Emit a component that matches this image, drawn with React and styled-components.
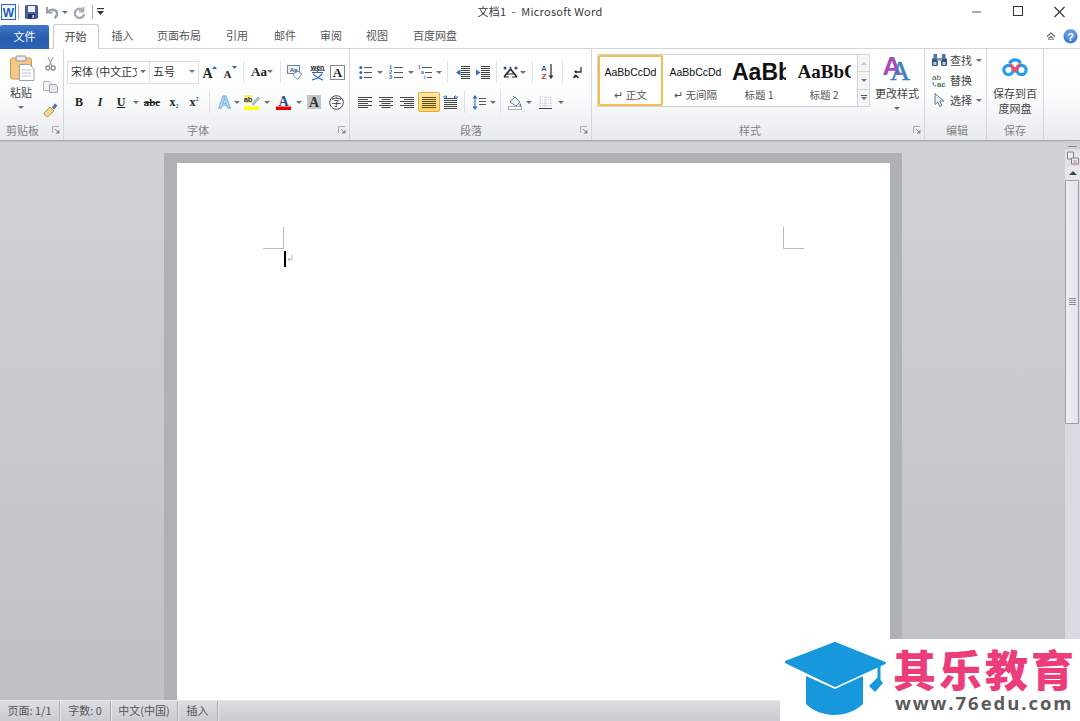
import React from "react";
import styled, { createGlobalStyle } from "styled-components";

const Global = createGlobalStyle`
  html, body { margin: 0; padding: 0; overflow: hidden; background: #fff; }
  #root { width: 1080px; height: 721px; }
  * { box-sizing: border-box; }
`;
const CJK = `"Noto Sans CJK SC", "Noto Sans", sans-serif`;

const Win = styled.div`
  position: relative; width: 1080px; height: 721px; display: flex; flex-direction: column;
  overflow: hidden; font-family: ${CJK}; font-size: 11px; color: #444; background: #fff;
`;
/* title bar */
const TitleBar = styled.div`
  height: 24px; flex: none; display: grid; grid-template-columns: 1fr auto 1fr; align-items: center;
`;
const Qat = styled.div`display: flex; align-items: center; padding-left: 1px;`;
const QatCell = styled.div`
  width: ${p => p.$w}px; height: 24px; display: flex; align-items: center; justify-content: center;
`;
const QatSep = styled.div`width: 1px; height: 14px; background: #a9adb2; margin: 0 ${p => p.$m}px;`;
const Title = styled.div`font-size: 11px; color: #3a3a3a; white-space: pre; letter-spacing: .25px; margin-top: -3px;`;
const WinCtrls = styled.div`display: flex; justify-content: flex-end; align-items: center; height: 24px; margin-top: -1px;`;
const WinBtn = styled.div`
  width: 41px; height: 24px; display: flex; align-items: center; justify-content: center;
`;
/* tabs */
const TabBar = styled.div`
  height: 25px; flex: none; display: flex; align-items: flex-end; position: relative;
  border-bottom: 1px solid #d4d7da;
`;
const FileTab = styled.div`
  width: 49px; height: 24px; margin-bottom: -1px; background: linear-gradient(#3f78c9, #2a5cae 55%, #2b62b8);
  color: #fff; display: flex; align-items: center; justify-content: center; border-radius: 2px 2px 0 0; padding-bottom: 2px;
`;
const HomeTab = styled.div`
  width: 46px; height: 25px; margin: 0 0 -1px 4px; background: #fff; border: 1px solid #c6c9cd; border-bottom: 0;
  border-radius: 3px 3px 0 0; display: flex; align-items: center; justify-content: center; color: #444; padding: 0 1px 2px 0;
`;
const Tab = styled.div`
  width: ${p => p.$w}px; height: 24px; display: flex; align-items: center; justify-content: center; color: #555; padding-bottom: 2px;
`;
const TabRight = styled.div`margin-left: auto; height: 24px; display: flex; align-items: center; gap: 7px; padding-right: 2px;`;
/* ribbon */
const Ribbon = styled.div`
  height: 92px; flex: none; display: flex; background: linear-gradient(#fff, #fbfcfc 50%, #e8ebee);
  border-bottom: 1px solid #a5a9ad;
`;
const Group = styled.div`
  width: ${p => p.$w}px; flex: none; display: flex; flex-direction: column; border-right: 1px solid #d3d6da;
`;
const GroupBody = styled.div`height: 73px; flex: none; display: flex; padding-left: ${p => p.$pl || 0}px;`;
const GroupLabel = styled.div`
  flex: 1; display: grid; grid-template-columns: ${p => p.$left}px auto 1fr; align-items: center; color: #7f8388; padding-bottom: 2px;
`;
const LabelText = styled.span`grid-column: 2;`;
const LauncherBox = styled.span`grid-column: 3; justify-self: end; margin-right: 3px; display: flex;`;
const Launcher = () => (
  <LauncherBox>
    <svg width="8" height="8" viewBox="0 0 8 8" fill="none">
      <path d="M.5 7V.5H7" stroke="#a6aaaf" />
      <path d="M3 3l3 3" stroke="#85898e" />
      <path d="M7.500 3.500v4h-4z" fill="#85898e" />
    </svg>
  </LauncherBox>
);
const Rows = styled.div`display: flex; flex-direction: column; gap: 6px; padding: 11px 0 0 4px;`;
const Row = styled.div`height: 24px; display: flex; align-items: center;`;
const Cell = styled.div`
  width: ${p => p.$w}px; height: 22px; flex: none; display: flex; align-items: center; justify-content: center;
`;
const RaisedCell = styled(Cell)`padding-bottom: 2px;`;
const Active = styled(Cell)`
  height: 20px; background: linear-gradient(#fde9a5, #fbd564); border: 1px solid #e2ac45; border-radius: 2px;
`;
const SepCell = styled.div`
  width: ${p => p.$w}px; height: 22px; flex: none; display: flex; justify-content: center;
  &::before { content: ""; width: 1px; background: #dfe1e4; }
`;
const Caret = styled.i`
  display: block; width: 0; height: 0; border: 3px solid transparent; border-top: 3px solid #6d7278; border-bottom: 0;
`;
const CaretCell = ({ w = 6 }) => <Cell $w={w}><Caret /></Cell>;
const Combo = styled.div`
  width: ${p => p.$w}px; height: 23px; flex: none; background: #fff; border: 1px solid #d9dce0; margin-left: -1px;
  display: flex; align-items: center; justify-content: space-between; padding: 0 3px 2px 3px; color: #333;
`;
const ComboText = styled.span`width: ${p => p.$w}px; overflow: hidden; white-space: nowrap; display: block;`;
const Fmt = styled.span`
  font-family: "Liberation Serif", serif; font-size: ${p => p.$s || 12}px; color: #222;
  font-weight: ${p => (p.$b ? 700 : 400)}; font-style: ${p => (p.$i ? "italic" : "normal")};
  text-decoration: ${p => p.$d || "none"}; line-height: 1; white-space: nowrap;
`;
const Sub = styled.sub`font-size: 6px; color: #2b62b8; vertical-align: -2px; line-height: 0;`;
const Sup = styled.sup`font-size: 6px; color: #2b62b8; vertical-align: 5px; line-height: 0;`;
/* clipboard */
const PasteCol = styled.div`
  width: 42px; flex: none; display: flex; flex-direction: column; align-items: center; padding: 6px 0 0 2px; color: #444;
`;
const PasteText = styled.div`margin: 3px 0 6px -2px; line-height: 16px;`;
const PasteCaret = styled.div`margin-left: -2px;`;
const MiniCol = styled.div`
  width: 16px; flex: none; display: flex; flex-direction: column; align-items: center; gap: 10px; padding-top: 8px;
`;
/* styles */
const StylesBody = styled(GroupBody)`padding: 5px 0 0 5px;`;
const Gallery = styled.div`
  width: 262px; height: 53px; background: #fff; border: 1px solid #d0d3d7; display: flex; overflow: hidden;
`;
const StyleCard = styled.div`
  width: ${p => p.$w}px; flex: none; height: 51px; display: flex; flex-direction: column; align-items: center; overflow: hidden;
  border: ${p => (p.$on ? "2px solid #f0c04f" : "0")}; border-radius: ${p => (p.$on ? 2 : 0)}px; padding-top: ${p => (p.$on ? 5 : 7)}px;
`;
const Preview = styled.div`
  height: 20px; width: ${p => p.$clip || 60}px; overflow: hidden; display: flex; align-items: center;
  justify-content: ${p => (p.$clip ? "flex-start" : "center")}; white-space: nowrap;
  font-family: ${p => p.$f || `"Liberation Sans", sans-serif`}; font-size: ${p => p.$s}px; color: #111;
  font-weight: ${p => (p.$b ? 700 : 400)};
`;
const StyleName = styled.div`font-size: 10.5px; color: #555; margin-top: 5px; line-height: 15px; white-space: pre;`;
const Scroller = styled.div`width: 12px; height: 53px; flex: none; display: flex; flex-direction: column;`;
const ScrollKey = styled.div`
  flex: 1; background: #f4f5f7; border: 1px solid #d3d6da; border-left: 0; margin-top: ${p => (p.$first ? 0 : -1)}px;
  display: flex; flex-direction: column; gap: 1px; align-items: center; justify-content: center;
`;
const Up = styled.i`display: block; border: 3px solid transparent; border-bottom: 3px solid #c4c7cb; border-top: 0;`;
const Bar = styled.i`display: block; width: 6px; height: 1px; background: #555;`;
const ChangeStyles = styled.div`
  width: 54px; display: flex; flex-direction: column; align-items: center; color: #444;
`;
const ChangeText = styled.div`line-height: 16px; margin: 4px 0 6px;`;
/* editing */
const EditCol = styled.div`display: flex; flex-direction: column; gap: 4px; padding: 3px 0 0 6px;`;
const EditRow = styled.div`height: 16px; display: flex; align-items: center; gap: 3px; color: #444;`;
const EditIcon = styled.div`width: 16px; display: flex; justify-content: center;`;
const EditCaret = styled.div`margin-left: 1px;`;
const SaveCol = styled.div`display: flex; flex-direction: column; align-items: center; width: 56px; padding-top: 7px;`;
const SaveText = styled.div`line-height: 15px; text-align: center; margin-top: 9px; color: #444;`;
/* doc */
const DocArea = styled.div`flex: 1; min-height: 0; display: flex; background: linear-gradient(#cfd2d6, #bec2c6);`;
const DocScroll = styled.div`
  flex: 1; display: flex; justify-content: center; padding: 11px 0 0 1px; overflow: hidden; border-top: 1px solid #bfc3c7;
`;
const PageEdge = styled.div`width: 738px; background: #aeb2b6; padding: 10px 12px 0 13px;`;
const Page = styled.div`height: 100%; background: #fff; padding: 64px 86px 0;`;
const MarginRow = styled.div`display: flex; justify-content: space-between;`;
const Crop = styled.div`
  width: 21px; height: 22px; border-bottom: 1px solid #b9b9b9;
  ${p => (p.$right ? "border-left: 1px solid #b9b9b9;" : "border-right: 1px solid #b9b9b9;")}
`;
const CaretLine = styled.div`display: flex; align-items: center; margin: 2px 0 0 21px; gap: 1px;`;
const TextCursor = styled.div`width: 2px; height: 16px; background: #000;`;
const VScroll = styled.div`
  width: 15px; flex: none; display: flex; flex-direction: column; background: #d8dbe1;
`;
const Splitter = styled.div`height: 8px; background: #cdd0d5; display: flex; justify-content: center; padding-top: 5px;
  &::before { content: ""; width: 9px; height: 1px; background: #888; }
`;
const RulerBtn = styled.div`height: 15px; margin-top: 1px; background: #e2e4e8; display: flex; align-items: center; justify-content: center;`;
const UpBtn = styled.div`
  height: 14px; margin-top: 1px; background: #e6e8ec; display: flex; align-items: center; justify-content: center;
  &::before { content: ""; border: 4px solid transparent; border-bottom: 4px solid #444; border-top: 0; }
`;
const Thumb = styled.div`
  height: 244px; background: linear-gradient(90deg, #eef0f4, #dfe3ea); border: 1px solid #9ba0a6; display: flex; flex-direction: column;
  align-items: center; justify-content: center; gap: 1px; padding-bottom: 2px; border-radius: 1px;
  margin-right: 1px;
`;
const Grip = styled.i`display: block; width: 7px; height: 1px; background: #8b9096;`;
/* status */
const Status = styled.div`
  height: 21px; flex: none; display: flex; background: linear-gradient(#dcdee1, #c9ccd0); border-top: 1px solid #e4e6e8;
  color: #555; align-items: center;
`;
const StatusItem = styled.div`
  width: ${p => p.$w}px; height: 20px; display: flex; align-items: center; justify-content: center; border-right: 1px solid #a9adb2;
  box-shadow: 1px 0 0 #e8eaec; white-space: nowrap; padding-bottom: 2px;
`;
/* watermark, lies over the window */
const Brand = styled.div`
  position: absolute; right: 0; bottom: 0; width: 300px; height: 82px; background: #fff; display: flex; align-items: flex-start;
`;
const BrandMark = styled.div`width: 115px; padding: 3px 0 0 5px; flex: none;`;
const BrandText = styled.div`display: flex; flex-direction: column; width: 185px;`;
const BrandName = styled.div`
  color: #ec3c7a; font-size: 43px; font-weight: 900; line-height: 50px; margin: 4px 0 0 -2px; letter-spacing: 3px; white-space: nowrap;
  font-family: "Noto Sans CJK SC", sans-serif;
`;
const BrandUrl = styled.div`
  color: #5b5b5b; font: 700 18.5px/20px "Open Sans", sans-serif; letter-spacing: 1.95px; white-space: nowrap;
`;

/* ---------- icons ---------- */
const WordLogo = () => (
  <svg width="15" height="16" viewBox="0 0 15 16">
    <rect x=".5" y=".5" width="14" height="15" fill="#e6f1fb" stroke="#2b6cc0" />
    <rect x="2" y="2.5" width="11" height="11" fill="#fff" />
    <text x="7.5" y="12.5" textAnchor="middle" fontFamily="Liberation Sans" fontWeight="700" fontSize="12" fill="#1d5bb0">W</text>
  </svg>
);
const SaveIco = () => (
  <svg width="13" height="14" viewBox="0 0 13 14">
    <rect x=".5" y=".5" width="12" height="13" rx="1" fill="#4660ab" stroke="#3a4f90" />
    <rect x="3" y="1" width="7" height="6" fill="#eef1f8" />
    <rect x="3" y="9" width="7" height="4.5" fill="#27335f" />
    <rect x="7.5" y="10" width="1.5" height="3" fill="#dfe3ee" />
  </svg>
);
const UndoIco = () => (
  <svg width="14" height="13" viewBox="0 0 14 13" fill="none">
    <path d="M2 1v5.500h5.500" stroke="#98a2ae" strokeWidth="2.200" />
    <path d="M2.500 6C5 2.500 12 3 12 7.500c0 2-1 3.500-2.500 4.500" stroke="#98a2ae" strokeWidth="2.400" />
  </svg>
);
const RedoIco = () => (
  <svg width="13" height="13" viewBox="0 0 13 13" fill="none">
    <path d="M10.500 1v4.500H6" stroke="#a5adb7" strokeWidth="1.800" />
    <path d="M10 4.500A4.600 4.600 0 1 0 11 8" stroke="#a5adb7" strokeWidth="2.400" />
  </svg>
);
const QatMore = () => (
  <svg width="7" height="8" viewBox="0 0 7 8"><rect width="7" height="1.2" fill="#333" /><path d="M0 3h7L3.5 7z" fill="#333" /></svg>
);
const MinIco = () => <svg width="11" height="11" viewBox="0 0 11 11"><path d="M0 6h9" stroke="#555" /></svg>;
const MaxIco = () => <svg width="11" height="11" viewBox="0 0 11 11"><rect x=".5" y=".5" width="9" height="9" fill="none" stroke="#333" /></svg>;
const CloseIco = () => <svg width="12" height="12" viewBox="0 0 12 12"><path d="M.5 1l10 10M10.500 1L.5 11" stroke="#333" strokeWidth="1.1" /></svg>;
const Collapse = () => (
  <svg width="10" height="9" viewBox="0 0 10 9" fill="none"><path d="M1 4.5L5 1l4 3.5M2.5 6.5L5 4.5l2.5 2" stroke="#666" strokeWidth="1.1" /><path d="M2 7.5h6" stroke="#999" /></svg>
);
const Help = () => (
  <svg width="15" height="15" viewBox="0 0 15 15">
    <circle cx="7.5" cy="7.5" r="7" fill="#3f7fd2" />
    <circle cx="7.5" cy="5" r="6" fill="#7fb0e8" opacity=".5" />
    <text x="7.5" y="11.5" textAnchor="middle" fontFamily="Liberation Sans" fontWeight="700" fontSize="11" fill="#fff">?</text>
  </svg>
);
const PasteIco = () => (
  <svg width="25" height="26" viewBox="0 0 25 26">
    <rect x=".5" y="3" width="21" height="21" rx="2" fill="#f6c885" stroke="#c39a5c" />
    <rect x="6" y="1" width="10" height="5" rx="1" fill="#e8ebee" stroke="#8c9096" />
    <path d="M9.500 9.500h10l4.500 4.500v11.500H9.500z" fill="#fff" stroke="#9ba3ab" />
    <path d="M12 15h9M12 18h9M12 21h9" stroke="#b5c4d4" />
  </svg>
);
const CutIco = () => (
  <svg width="11" height="14" viewBox="0 0 11 14" fill="none">
    <path d="M3 0l4 9M8 0L4 9" stroke="#a2a7ad" strokeWidth="1.2" />
    <circle cx="2.8" cy="11" r="2" stroke="#8f8f8f" strokeWidth="1.3" /><circle cx="8.2" cy="11" r="2" stroke="#8f8f8f" strokeWidth="1.3" />
  </svg>
);
const CopyIco = () => (
  <svg width="15" height="12" viewBox="0 0 15 12">
    <path d="M.5.5h6l2 2v7h-8z" fill="#f2f2f3" stroke="#b2b6ba" /><path d="M6.5 3.5h6l2 2v6h-8z" fill="#e6e8ea" stroke="#a4a8ad" />
  </svg>
);
const BrushIco = () => (
  <svg width="15" height="14" viewBox="0 0 15 14">
    <path d="M1 10l6-6 4 4-6 5.5c-2 .5-4-1.500-4-3.500z" fill="#f0d78e" stroke="#b79a4e" />
    <path d="M9 4l3-3.500 2.500 2L11 6.500z" fill="#5b6fae" />
  </svg>
);
const GrowIco = ({ down }) => (
  <svg width="15" height="14" viewBox="0 0 15 14">
    <text x="5.500" y="13" textAnchor="middle" fontFamily="Liberation Serif" fontWeight="700" fontSize={down ? 11 : 14} fill="#222">A</text>
    <path d={down ? "M10 1h5l-2.500 3z" : "M10 4h5l-2.500-3z"} fill="#2b62b8" />
  </svg>
);
const ClearIco = () => (
  <svg width="16" height="15" viewBox="0 0 16 15">
    <rect x=".5" y=".5" width="12" height="8" fill="#eef3f8" stroke="#6e88a5" />
    <text x="6.500" y="7" textAnchor="middle" fontFamily="Liberation Sans" fontWeight="700" fontSize="6" fill="#3c5572">Aa</text>
    <path d="M6 9l5-3 4 3-4 5c-2 .5-4-3-5-5z" fill="#f4f4f6" stroke="#6e88a5" />
  </svg>
);
const PinyinIco = () => (
  <svg width="17" height="17" viewBox="0 0 17 17">
    <text x="8.500" y="6" textAnchor="middle" fontFamily="Liberation Sans" fontWeight="700" fontSize="7" fill="#222">wén</text>
    <path d="M1 6.500h15" stroke="#777" /><path d="M3 8.500h11M4 9.500c2 3 6 5 10 6.500M13 9.500C11 13 7 15 3 16M8.500 6.500v2" stroke="#2b62b8" strokeWidth="1.2" fill="none" />
  </svg>
);
const BoxA = () => (
  <svg width="15" height="15" viewBox="0 0 15 15">
    <rect x=".5" y=".5" width="14" height="14" fill="#fff" stroke="#7e8a96" />
    <text x="7.500" y="12" textAnchor="middle" fontFamily="Liberation Serif" fontWeight="700" fontSize="13" fill="#222">A</text>
  </svg>
);
const EffectA = () => (
  <svg width="15" height="16" viewBox="0 0 15 16">
    <text x="7.500" y="14" textAnchor="middle" fontFamily="Liberation Sans" fontWeight="700" fontSize="17" fill="#d8ecfa" stroke="#6daee3" strokeWidth="1">A</text>
  </svg>
);
const HighlightIco = () => (
  <svg width="16" height="15" viewBox="0 0 16 15">
    <rect x="0" y="0" width="8" height="8" fill="#f6ee7c" />
    <text x="4" y="7" textAnchor="middle" fontFamily="Liberation Sans" fontWeight="700" fontSize="7.500" fill="#333">ab</text>
    <path d="M8 9l6-7 1.500 1.500-6 6.500z" fill="#b9cfe6" stroke="#6a8db3" strokeWidth=".7" />
    <rect y="11.500" width="15" height="3.500" fill="#ffff00" />
  </svg>
);
const ColorA = () => (
  <svg width="15" height="15" viewBox="0 0 15 15">
    <text x="7.500" y="10.500" textAnchor="middle" fontFamily="Liberation Serif" fontWeight="700" fontSize="14" fill="#2d4f8e">A</text>
    <rect y="11.500" width="15" height="3.500" fill="#f00000" />
  </svg>
);
const ShadedA = () => (
  <svg width="14" height="14" viewBox="0 0 14 14">
    <rect width="14" height="14" fill="#c3c4c6" />
    <text x="7" y="12" textAnchor="middle" fontFamily="Liberation Serif" fontWeight="700" fontSize="14" fill="#333">A</text>
  </svg>
);
const CircleChar = () => (
  <svg width="15" height="15" viewBox="0 0 15 15">
    <circle cx="7.500" cy="7.500" r="6.800" fill="#fff" stroke="#444" />
    <text x="7.500" y="11" textAnchor="middle" fontFamily="Noto Sans CJK SC" fontSize="10" fill="#333">字</text>
  </svg>
);
const lines = (ys, x1, x2, c = "#555") => ys.map((y, i) => <path key={i} d={`M${x1} ${y}H${x2}`} stroke={c} />);
const BulletIco = () => (
  <svg width="13" height="13" viewBox="0 0 13 13">
    {[1.500, 6.500, 11.500].map(y => <circle key={y} cx="1.800" cy={y} r="1.500" fill="#2f6bbd" />)}
    {lines([1.500, 6.500, 11.500], 5, 13)}
  </svg>
);
const NumberIco = () => (
  <svg width="14" height="14" viewBox="0 0 14 14">
    {[[4, "1"], [9, "2"], [14, "3"]].map(([y, t]) => <text key={t} x="0" y={y} fontSize="5.500" fontWeight="700" fontFamily="Liberation Sans" fill="#2f6bbd">{t}</text>)}
    {lines([2.500, 7.500, 12.500], 5, 14)}
  </svg>
);
const MultiIco = () => (
  <svg width="14" height="14" viewBox="0 0 14 14">
    <text x="0" y="4" fontSize="5" fontWeight="700" fontFamily="Liberation Sans" fill="#2f6bbd">1</text>
    <text x="3" y="9" fontSize="5" fontWeight="700" fontFamily="Liberation Sans" fill="#2f6bbd">a</text>
    <text x="6" y="14" fontSize="5" fontWeight="700" fontFamily="Liberation Sans" fill="#2f6bbd">i</text>
    <path d="M4 2.500h10M7 7.500h7M9 12.500h5" stroke="#555" />
  </svg>
);
const IndentIco = ({ out }) => (
  <svg width="14" height="13" viewBox="0 0 14 13">
    {lines([.500, 2.500, 4.500, 6.500, 8.500, 10.500, 12.500], 5, 14, "#3d3d3d")}
    <path d={out ? "M0 6.500L4.500 3.500v6z" : "M4.500 6.500L0 3.500v6z"} fill="#2f6bbd" />
  </svg>
);
const AsianIco = () => (
  <svg width="15" height="13" viewBox="0 0 15 13">
    <path d="M1 11L7.500 3 14 11" stroke="#222" strokeWidth="1.600" fill="none" /><path d="M1 11h5M9 11h5M4 8h7" stroke="#222" strokeWidth="1.200" />
    <circle cx="2" cy="2" r="1.500" fill="#1c4e9c" /><circle cx="13" cy="2" r="1.500" fill="#1c4e9c" /><circle cx="7.500" cy="1.500" r="1" fill="#1c4e9c" />
  </svg>
);
const SortIco = () => (
  <svg width="14" height="16" viewBox="0 0 14 16">
    <text x="4" y="7" textAnchor="middle" fontSize="8" fontWeight="700" fontFamily="Liberation Sans" fill="#2f6bbd">A</text>
    <text x="4" y="15" textAnchor="middle" fontSize="8" fontWeight="700" fontFamily="Liberation Sans" fill="#b23a3a">Z</text>
    <path d="M11 0v13" stroke="#333" strokeWidth="1.300" /><path d="M8.500 11.500h5L11 15z" fill="#333" />
  </svg>
);
const PilcrowIco = () => (
  <svg width="11" height="13" viewBox="0 0 11 13" fill="none">
    <path d="M9 1v5H3" stroke="#333" strokeWidth="1.300" /><path d="M3 6l2-1.500v3z" fill="#333" />
    <path d="M4 9.500L1.500 12M4 9.500l2.500 2.500" stroke="#222" strokeWidth="1.500" /><circle cx="3.500" cy="5.500" r="1" fill="#222" /><circle cx="3.500" cy="10" r="1.200" fill="#222" />
  </svg>
);
const AlignIco = ({ type }) => {
  const y = [.5, 2.5, 4.5, 6.5, 8.5, 10.5];
  const wide = [0, 14], n = { left: [0, 10], center: [2.5, 11.5], right: [4, 14] }[type];
  return (
    <svg width="14" height="11" viewBox="0 0 14 11">
      {y.map((v, i) => {
        const [a, b] = i % 2 ? n : wide;
        return <path key={v} d={`M${a} ${v}H${b}`} stroke="#444" />;
      })}
    </svg>
  );
};
const JustifyIco = () => <svg width="14" height="11" viewBox="0 0 14 11">{lines([.5, 2.5, 4.5, 6.5, 8.5, 10.5], 0, 14, "#5b4a1e")}</svg>;
const DistIco = () => (
  <svg width="15" height="14" viewBox="0 0 15 14">
    <path d="M0 2h4M11 2h4M4 2L2.500 .5M4 2L2.500 3.500M11 2l1.500-1.500M11 2l1.500 1.500" stroke="#2f6bbd" />
    {lines([3.500, 5.500, 7.500, 9.500, 11.500, 13.500], 1, 14, "#444")}
  </svg>
);
const SpacingIco = () => (
  <svg width="15" height="15" viewBox="0 0 15 15">
    <path d="M3 0L.5 3.500h5zM3 15L.5 11.500h5z" fill="#2f6bbd" /><path d="M3 3v9" stroke="#2f6bbd" />
    {lines([3.500, 6.500, 9.500], 7, 14, "#555")}
  </svg>
);
const ShadeIco = () => (
  <svg width="15" height="15" viewBox="0 0 15 15">
    <path d="M2 7l5-5 5 5-4 4z" fill="#f3f6fa" stroke="#5d7ea6" /><path d="M5 1l2 2" stroke="#5d7ea6" />
    <path d="M12 8c1 1.500 1.500 2 1 2.800-.6.600-1.600.200-1.400-1z" fill="#2f6bbd" />
    <rect x=".5" y="11.500" width="13" height="3" fill="#fff" stroke="#a8adb3" />
  </svg>
);
const BorderIco = () => (
  <svg width="13" height="13" viewBox="0 0 13 13">
    <path d="M1 1h11M1 4h11M1 7h11M1 10h11M1 1v9M6.500 1v9M12 1v9" stroke="#c5c8cc" strokeDasharray="1 1" />
    <path d="M0 12.500h13" stroke="#444" />
  </svg>
);
const ChangeIco = () => (
  <svg width="28" height="27" viewBox="0 0 28 27">
    <text x="9" y="21" textAnchor="middle" fontFamily="Liberation Sans" fontWeight="700" fontSize="26" fill="#a44bb5">A</text>
    <text x="17" y="26" textAnchor="middle" fontFamily="Liberation Serif" fontWeight="400" fontSize="28" fill="#3f7cc6" stroke="#3f7cc6" strokeWidth=".5">A</text>
  </svg>
);
const FindIco = () => (
  <svg width="15" height="12" viewBox="0 0 15 12">
    <rect x="0" y="4" width="6" height="8" rx="1.500" fill="#33557e" /><rect x="9" y="4" width="6" height="8" rx="1.500" fill="#33557e" />
    <rect x="1.500" y="0" width="3.500" height="5" fill="#4d76a8" /><rect x="10" y="0" width="3.500" height="5" fill="#4d76a8" /><rect x="5" y="4" width="5" height="3" fill="#8aa2bd" />
    <rect x="1.500" y="8" width="3" height="3" fill="#b8d0ea" /><rect x="10.500" y="8" width="3" height="3" fill="#b8d0ea" />
  </svg>
);
const ReplaceIco = () => (
  <svg width="15" height="15" viewBox="0 0 15 15">
    <text x="0" y="6.500" fontFamily="Liberation Sans" fontSize="8" fill="#555">ab</text>
    <text x="5" y="14" fontFamily="Liberation Sans" fontWeight="700" fontSize="7.500" fill="#3d7d3a">ac</text>
    <path d="M1 9c0 3 1 4 3 4" stroke="#2f6bbd" fill="none" />
  </svg>
);
const SelectIco = () => (
  <svg width="11" height="14" viewBox="0 0 11 14"><path d="M1 .5v11l2.800-2.500 2 4.500 2-1-2-4.300 4-.2z" fill="#e8eef6" stroke="#6f7f93" /></svg>
);
const BaiduIco = () => (
  <svg width="26" height="21" viewBox="0 0 26 21" fill="none">
    <circle cx="6.500" cy="14" r="4.600" stroke="#2a9bea" strokeWidth="3.200" />
    <circle cx="19.500" cy="14" r="4.600" stroke="#2a9bea" strokeWidth="3.200" />
    <path d="M7.500 7.500a6 6 0 0 1 11 0" stroke="#2a9bea" strokeWidth="3.200" />
    <path d="M8 9c2 0 3.200 3 5 5.500 1.800-2.500 3-5.500 5-5.500" stroke="#ee4e62" strokeWidth="3.200" />
  </svg>
);
const RulerIco = () => (
  <svg width="12" height="14" viewBox="0 0 12 14">
    <path d="M.5 1h6v7h-6z" fill="#eee" stroke="#7d8187" /><path d="M4.500 7h7v6h-7z" fill="#f3e6ea" stroke="#7d8187" /><path d="M6.500 9l3 3M9.500 9l-3 3" stroke="#b6849a" />
  </svg>
);
const ParaMark = () => (
  <svg width="6" height="8" viewBox="0 0 6 8" fill="none"><path d="M5 0v4.500H1" stroke="#b5b5b5" /><path d="M2.500 3L1 4.500 2.500 6" stroke="#b5b5b5" /></svg>
);
const CapIco = () => (
  <svg width="101" height="76" viewBox="0 0 101 76">
    <path d="M50 1L100 21 50 44 0 20z" fill="#1798dc" stroke="#1798dc" strokeWidth="2" strokeLinejoin="round" />
    <path d="M21 34l29 13 28-13v28c-8 8-20 11-29 11-10 0-21-4-28-11z" fill="#1798dc" />
    <path d="M94 24v16" stroke="#1798dc" strokeWidth="3" />
    <path d="M93 35l5 6-8 9-6-6z" fill="#1798dc" />
  </svg>
);

const Row1Cells = () => (
  <Row>
    <Combo $w={83}><ComboText $w={66}>宋体 (中文正文</ComboText><Caret /></Combo>
    <Combo $w={50}><ComboText $w={30}>五号</ComboText><Caret /></Combo>
    <Cell $w={20}><GrowIco /></Cell>
    <Cell $w={20}><GrowIco down /></Cell>
    <SepCell $w={8} />
    <RaisedCell $w={30}><Fmt $b $s={13}>Aa</Fmt><Caret /></RaisedCell>
    <SepCell $w={6} />
    <Cell $w={24}><ClearIco /></Cell>
    <Cell $w={20}><PinyinIco /></Cell>
    <Cell $w={20}><BoxA /></Cell>
  </Row>
);
const Row2Cells = () => (
  <Row>
    <Cell $w={22}><Fmt $b $s={12}>B</Fmt></Cell>
    <Cell $w={20}><Fmt $b $i $s={12}>I</Fmt></Cell>
    <Cell $w={22}><Fmt $b $s={12} $d="underline">U</Fmt></Cell>
    <CaretCell w={8} />
    <Cell $w={24}><Fmt $b $s={11} $d="line-through">abc</Fmt></Cell>
    <Cell $w={20}><Fmt $b $s={12}>x<Sub>2</Sub></Fmt></Cell>
    <Cell $w={20}><Fmt $b $s={12}>x<Sup>2</Sup></Fmt></Cell>
    <SepCell $w={10} />
    <Cell $w={20}><EffectA /></Cell>
    <CaretCell />
    <Cell $w={24}><HighlightIco /></Cell>
    <CaretCell />
    <Cell $w={26}><ColorA /></Cell>
    <CaretCell />
    <Cell $w={24}><ShadedA /></Cell>
    <Cell $w={20}><CircleChar /></Cell>
  </Row>
);
const Para1 = () => (
  <Row>
    <Cell $w={22}><BulletIco /></Cell><CaretCell w={8} />
    <Cell $w={24}><NumberIco /></Cell><CaretCell />
    <Cell $w={22}><MultiIco /></Cell><CaretCell />
    <SepCell $w={10} />
    <Cell $w={22}><IndentIco out /></Cell>
    <Cell $w={18}><IndentIco /></Cell>
    <SepCell $w={8} />
    <Cell $w={20}><AsianIco /></Cell><CaretCell />
    <SepCell $w={12} />
    <Cell $w={18}><SortIco /></Cell>
    <SepCell $w={12} />
    <Cell $w={18}><PilcrowIco /></Cell>
  </Row>
);
const Para2 = () => (
  <Row>
    <Cell $w={22}><AlignIco type="left" /></Cell>
    <Cell $w={20}><AlignIco type="center" /></Cell>
    <Cell $w={22}><AlignIco type="right" /></Cell>
    <Active $w={22}><JustifyIco /></Active>
    <Cell $w={20}><DistIco /></Cell>
    <SepCell $w={8} />
    <Cell $w={22}><SpacingIco /></Cell><CaretCell />
    <SepCell $w={8} />
    <Cell $w={22}><ShadeIco /></Cell><CaretCell />
    <Cell $w={26}><BorderIco /></Cell><CaretCell />
  </Row>
);

export default function App() {
  return (
    <Win>
      <Global />
      <TitleBar>
        <Qat>
          <WordLogo />
          <QatSep $m={2} />
          <QatCell $w={21}><SaveIco /></QatCell>
          <QatCell $w={20}><UndoIco /></QatCell>
          <QatCell $w={6}><Caret /></QatCell>
          <QatCell $w={22}><RedoIco /></QatCell>
          <QatSep $m={2} />
          <QatCell $w={10}><QatMore /></QatCell>
        </Qat>
        <Title>文档1  -  Microsoft Word</Title>
        <WinCtrls>
          <WinBtn><MinIco /></WinBtn>
          <WinBtn><MaxIco /></WinBtn>
          <WinBtn><CloseIco /></WinBtn>
        </WinCtrls>
      </TitleBar>
      <TabBar>
        <FileTab>文件</FileTab>
        <HomeTab>开始</HomeTab>
        <Tab $w={47}>插入</Tab>
        <Tab $w={66}>页面布局</Tab>
        <Tab $w={50}>引用</Tab>
        <Tab $w={46}>邮件</Tab>
        <Tab $w={46}>审阅</Tab>
        <Tab $w={46}>视图</Tab>
        <Tab $w={70}>百度网盘</Tab>
        <TabRight><Collapse /><Help /></TabRight>
      </TabBar>
      <Ribbon>
        <Group $w={64}>
          <GroupBody>
            <PasteCol><PasteIco /><PasteText>粘贴</PasteText><PasteCaret><Caret /></PasteCaret></PasteCol>
            <MiniCol><CutIco /><CopyIco /><BrushIco /></MiniCol>
          </GroupBody>
          <GroupLabel $left={6}><LabelText>剪贴板</LabelText><Launcher /></GroupLabel>
        </Group>
        <Group $w={286}>
          <GroupBody><Rows><Row1Cells /><Row2Cells /></Rows></GroupBody>
          <GroupLabel $left={123}><LabelText>字体</LabelText><Launcher /></GroupLabel>
        </Group>
        <Group $w={242}>
          <GroupBody><Rows><Para1 /><Para2 /></Rows></GroupBody>
          <GroupLabel $left={110}><LabelText>段落</LabelText><Launcher /></GroupLabel>
        </Group>
        <Group $w={333}>
          <StylesBody>
            <Gallery>
              <StyleCard $w={65} $on><Preview $s={10.5}>AaBbCcDd</Preview><StyleName>↵ 正文</StyleName></StyleCard>
              <StyleCard $w={65}><Preview $s={10.5}>AaBbCcDd</Preview><StyleName>↵ 无间隔</StyleName></StyleCard>
              <StyleCard $w={62}><Preview $s={23} $b $clip={54}>AaBbC</Preview><StyleName>标题 1</StyleName></StyleCard>
              <StyleCard $w={68}><Preview $s={19} $b $clip={53} $f={`"Liberation Serif", serif`}>AaBbCc</Preview><StyleName>标题 2</StyleName></StyleCard>
            </Gallery>
            <Scroller>
              <ScrollKey $first><Up /></ScrollKey>
              <ScrollKey><Caret /></ScrollKey>
              <ScrollKey><Bar /><Caret /></ScrollKey>
            </Scroller>
            <ChangeStyles>
              <ChangeIco />
              <ChangeText>更改样式</ChangeText>
              <Caret />
            </ChangeStyles>
          </StylesBody>
          <GroupLabel $left={147}><LabelText>样式</LabelText><Launcher /></GroupLabel>
        </Group>
        <Group $w={62}>
          <GroupBody>
            <EditCol>
              <EditRow><EditIcon><FindIco /></EditIcon>查找<EditCaret><Caret /></EditCaret></EditRow>
              <EditRow><EditIcon><ReplaceIco /></EditIcon>替换</EditRow>
              <EditRow><EditIcon><SelectIco /></EditIcon>选择<EditCaret><Caret /></EditCaret></EditRow>
            </EditCol>
          </GroupBody>
          <GroupLabel $left={21}><LabelText>编辑</LabelText></GroupLabel>
        </Group>
        <Group $w={57}>
          <GroupBody>
            <SaveCol><BaiduIco /><SaveText>保存到百<br />度网盘</SaveText></SaveCol>
          </GroupBody>
          <GroupLabel $left={17}><LabelText>保存</LabelText></GroupLabel>
        </Group>
      </Ribbon>
      <DocArea>
        <DocScroll>
          <PageEdge>
            <Page>
              <MarginRow><Crop /><Crop $right /></MarginRow>
              <CaretLine><TextCursor /><ParaMark /></CaretLine>
            </Page>
          </PageEdge>
        </DocScroll>
        <VScroll>
          <Splitter />
          <RulerBtn><RulerIco /></RulerBtn>
          <UpBtn />
          <Thumb><Grip /><Grip /><Grip /><Grip /></Thumb>
        </VScroll>
      </DocArea>
      <Status>
        <StatusItem $w={60}>页面: 1/1</StatusItem>
        <StatusItem $w={51}>字数: 0</StatusItem>
        <StatusItem $w={67}>中文(中国)</StatusItem>
        <StatusItem $w={40}>插入</StatusItem>
      </Status>
      <Brand>
        <BrandMark><CapIco /></BrandMark>
        <BrandText>
          <BrandName>其乐教育</BrandName>
          <BrandUrl>www.76edu.com</BrandUrl>
        </BrandText>
      </Brand>
    </Win>
  );
}
